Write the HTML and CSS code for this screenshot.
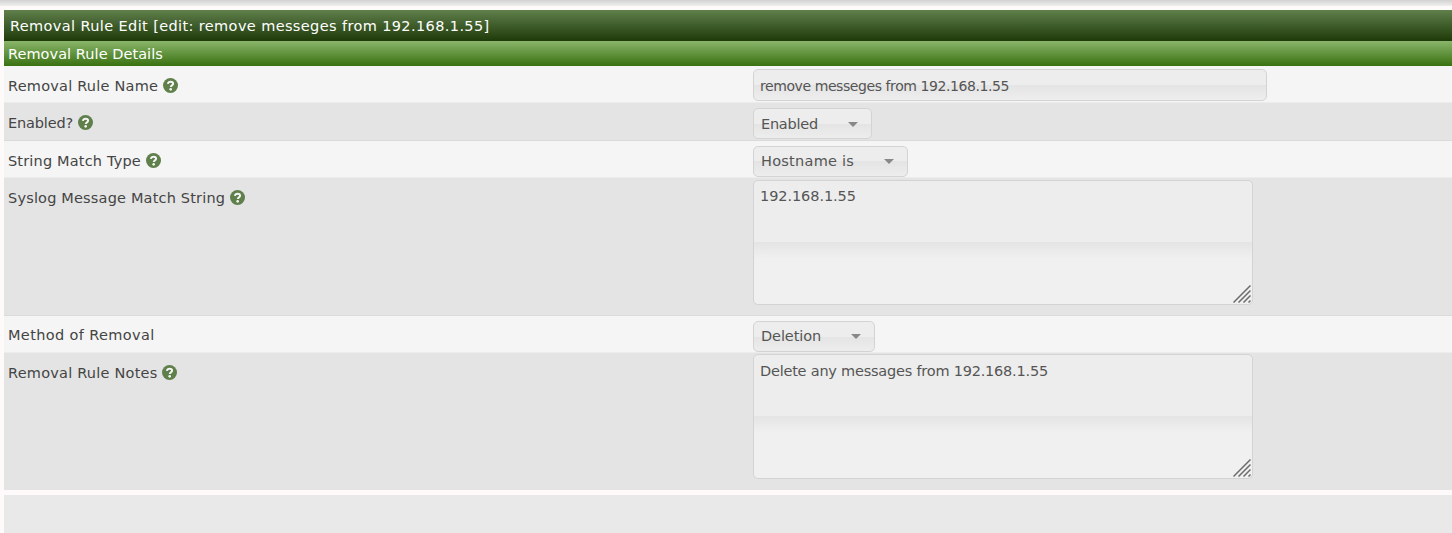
FILE: index.html
```html
<!DOCTYPE html>
<html lang="en">
<head>
<meta charset="utf-8">
<title>Removal Rule Edit</title>
<link rel="stylesheet" href="styles.css">
</head>
<body>
<svg width="0" height="0" class="defs">
  <symbol id="help" viewBox="0 0 16 16"><circle cx="8" cy="8" r="8" fill="#5f7f4b"/><path d="M5.2 6.3C5.5 4.6 6.6 3.9 8.1 3.9c1.6 0 2.7.9 2.7 2.2 0 1.8-2.5 1.7-2.5 3.5" fill="none" stroke="#f5f5f5" stroke-width="2.1"/><circle cx="8.2" cy="12.1" r="1.4" fill="#f5f5f5"/></symbol>
  <symbol id="grip" viewBox="0 0 18 18"><path d="M.5 17.5l17-17M5.5 17.5l12-12M10.5 17.5l7-7M15.5 17.5l2-2" stroke="#6c6c6c" stroke-width="1.5" fill="none"/></symbol>
</svg>
<div class="topbar"></div>
<main class="form">
  <header class="title"><span class="t-title">Removal Rule Edit [edit: remove messeges from 192.168.1.55]</span></header>
  <div class="section"><span class="t-section">Removal Rule Details</span></div>
  <div class="row odd r1">
    <div class="label"><span class="t-name">Removal Rule Name</span><svg class="help"><use href="#help"/></svg></div>
    <div class="field"><div class="input"><span class="t-input">remove messeges from 192.168.1.55</span></div></div>
  </div>
  <div class="row even r2">
    <div class="label"><span class="t-enabled">Enabled?</span><svg class="help"><use href="#help"/></svg></div>
    <div class="field"><div class="select s-enabled"><span class="t-sel1">Enabled</span><i class="caret"></i></div></div>
  </div>
  <div class="row odd r3">
    <div class="label"><span class="t-type">String Match Type</span><svg class="help"><use href="#help"/></svg></div>
    <div class="field"><div class="select s-host"><span class="t-sel2">Hostname is</span><i class="caret"></i></div></div>
  </div>
  <div class="row even r4">
    <div class="label"><span class="t-string">Syslog Message Match String</span><svg class="help"><use href="#help"/></svg></div>
    <div class="field"><div class="area"><span class="t-area1">192.168.1.55</span><svg class="grip"><use href="#grip"/></svg></div></div>
  </div>
  <div class="row odd r5">
    <div class="label"><span class="t-method">Method of Removal</span></div>
    <div class="field"><div class="select s-del"><span class="t-sel3">Deletion</span><i class="caret"></i></div></div>
  </div>
  <div class="row even r6">
    <div class="label"><span class="t-notes">Removal Rule Notes</span><svg class="help"><use href="#help"/></svg></div>
    <div class="field"><div class="area"><span class="t-area2">Delete any messages from 192.168.1.55</span><svg class="grip"><use href="#grip"/></svg></div></div>
  </div>
</main>
<footer class="actions"></footer>
</body>
</html>
```
FILE: styles.css
```css
* { box-sizing: border-box; }
body { margin: 0; height: 533px; overflow: hidden; background: #fffafa; color: #444; font: 14.5px/20px "DejaVu Sans", sans-serif; }
span { white-space: nowrap; }
.defs { display: block; }
.topbar { height: 6px; margin-bottom: 4px; background: linear-gradient(#d2d2d2, #efefef); }
.form { margin-left: 4px; }
.title { height: 31px; padding: 6px 6px 0; color: #fff; background: linear-gradient(#5f7f4b, #1e3a09); }
.section { height: 25px; padding: 3px 4px 0; color: #fff; background: linear-gradient(#8ab56b, #397110); }
.row { display: grid; grid-template-columns: 749px 1fr; border-bottom: 1px solid #ececec; }
.odd { background: #f5f5f5; }
.even { background: #e4e4e4; border-bottom-color: #dadada; }
.label { display: flex; align-items: flex-start; gap: 5px; padding: 10px 4px 0; }
.field { padding-top: 3px; color: #555; }
.help { width: 15px; height: 15px; margin-top: 2px; }
.r1 { height: 37px; }
.r2 { height: 38px; }
.r3 { height: 37px; }
.r4 { height: 138px; }
.r5 { height: 37px; }
.r6 { height: 137px; border-bottom-color: #e4e4e4; }
.r2 .field { padding-top: 5px; }
.r3 .field { padding-top: 5px; }
.r4 .field { padding-top: 2px; }
.r5 .field { padding-top: 5px; }
.r5 .label { padding-top: 9px; }
.r6 .field { padding-top: 1px; }
.input, .select, .area { border: 1px solid #d3d3d3; border-radius: 5px; }
.input { width: 514px; height: 32px; padding: 6px; background: linear-gradient(#ededed 50%, #e4e4e4 50%, #eee); }
.select { height: 31px; padding: 4px 13px 0 7px; display: flex; justify-content: space-between; background: linear-gradient(#ededed 50%, #e4e4e4 50%, #ededed); }
.r2 .select { padding-top: 5px; }
.caret { width: 10px; height: 5px; margin-top: 8px; background: #888; clip-path: polygon(0 0, 100% 0, 50% 100%); }
.s-enabled { width: 119px; }
.s-host { width: 155px; }
.s-del { width: 122px; }
.area { position: relative; width: 500px; height: 125px; padding: 5px 6px; background: linear-gradient(#ededed 49.5%, #e4e4e4 49.5%, #f0f0f0 63%); }
.r6 .area { padding-top: 6px; }
.grip { position: absolute; right: 1px; bottom: 1px; width: 18px; height: 18px; }
.actions { height: 38px; margin: 5px 0 0 4px; background: #e9e9e9; }

/* Tracking per text */
.t-title { letter-spacing: .38px; }
.t-section { letter-spacing: .05px; }
.t-name { letter-spacing: .22px; }
.t-notes { letter-spacing: .22px; }
.t-enabled { letter-spacing: -.15px; }
.t-type { letter-spacing: .17px; }
.t-string { letter-spacing: .18px; }
.t-method { letter-spacing: .36px; }
.t-input { font-size: 14px; letter-spacing: -.42px; }
.t-sel1 { letter-spacing: -.25px; }
.t-sel2 { letter-spacing: .26px; }
.t-sel3 { letter-spacing: -.1px; }
.t-area1 { letter-spacing: -.08px; }
.t-area2 { letter-spacing: -.22px; }
```
